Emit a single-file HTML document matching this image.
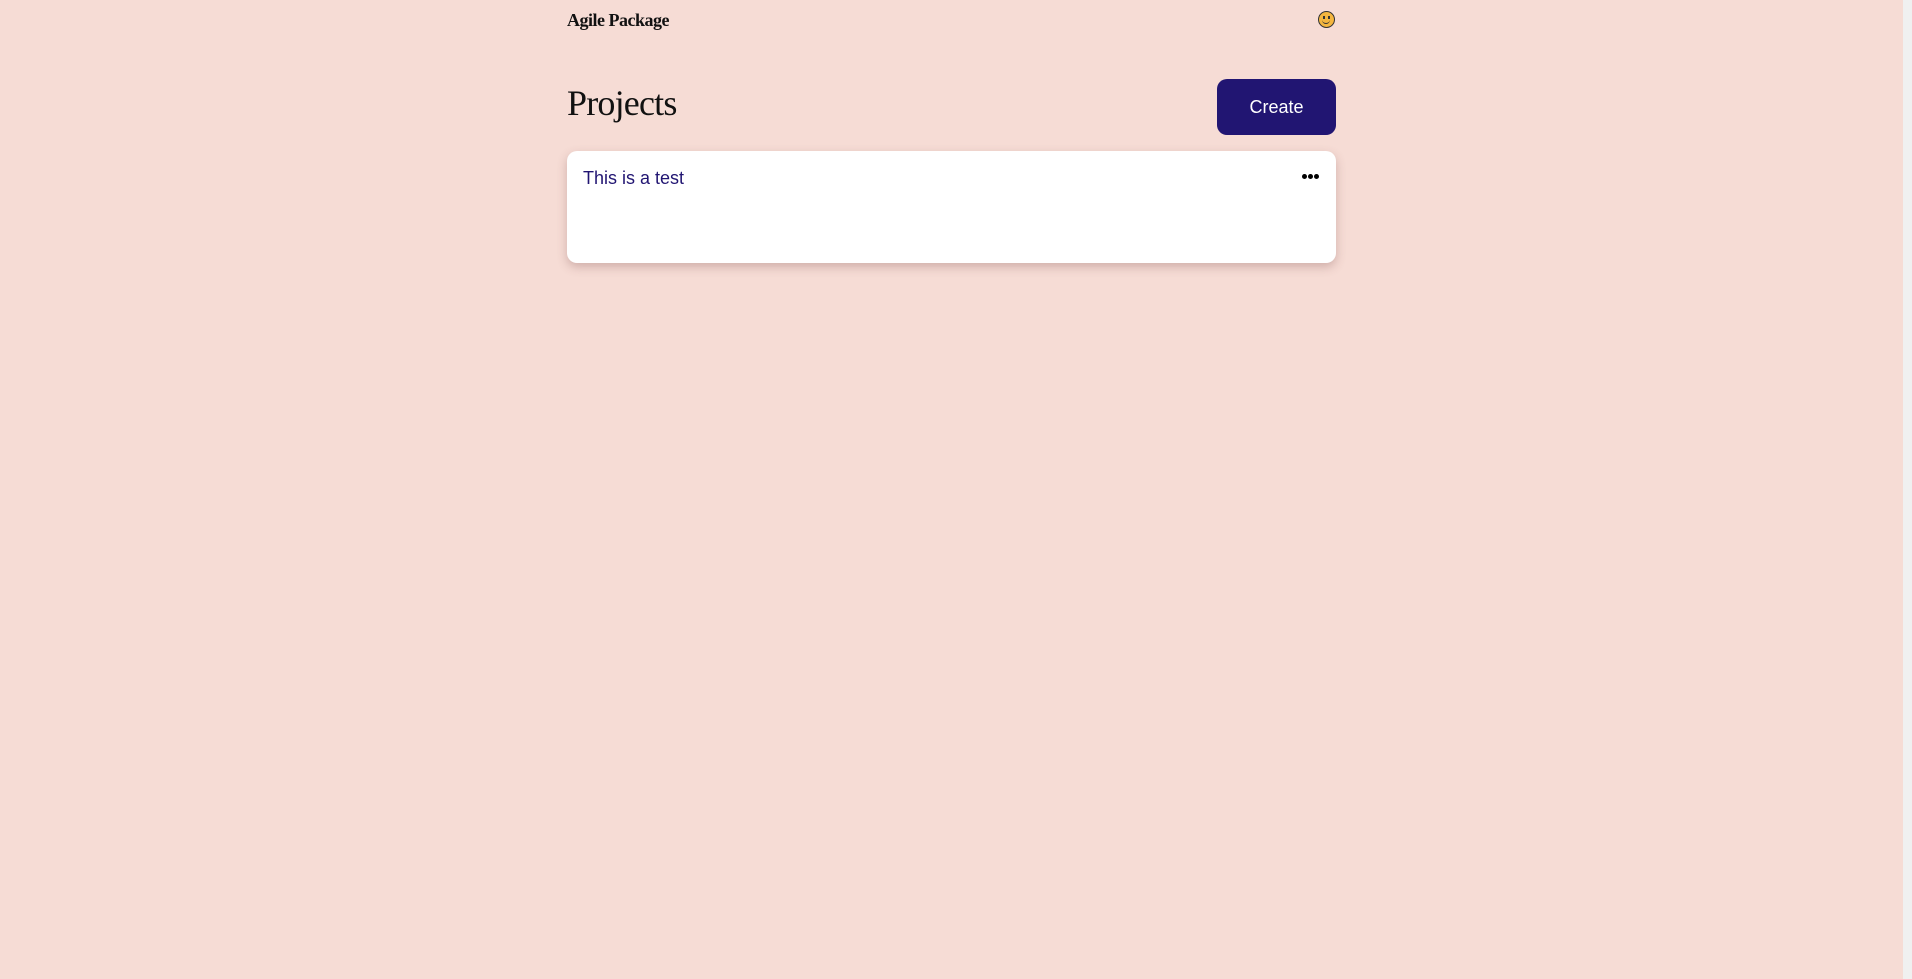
<!DOCTYPE html>
<html><head><meta charset="utf-8"><style>
html,body{margin:0;padding:0;width:1912px;height:979px;overflow:hidden;background:#f6dcd5;}
.sb{position:absolute;right:0;top:0;width:9px;height:979px;background:#f0f0f0;}
.t{position:absolute;left:567px;top:10px;font:bold 18px "Liberation Serif",serif;color:#111;letter-spacing:-0.5px;}
.sm{position:absolute;left:1318px;top:11px;width:17px;height:17px;border-radius:50%;background:#f4b63f;border:1px solid #333;box-sizing:border-box;}
.sm:before,.sm:after{content:"";position:absolute;top:4px;width:2px;height:3px;background:#333;}
.sm:before{left:4px}.sm:after{left:9px}
.sm i{position:absolute;left:3px;top:6px;width:8px;height:5px;border-bottom:1px solid #333;border-radius:0 0 5px 5px;}
h1{position:absolute;left:567px;top:82px;margin:0;font:normal 36px "Liberation Serif",serif;color:#111;letter-spacing:-0.8px;}
.btn{position:absolute;left:1217px;top:79px;width:119px;height:56px;border-radius:10px;background:#211572;color:#fff;font:18px "Liberation Sans",sans-serif;display:flex;align-items:center;justify-content:center;}
.card{position:absolute;left:567px;top:151px;width:769px;height:112px;background:#fff;border-radius:10px;box-shadow:0 4px 10px rgba(120,70,70,.3);}
.card span{position:absolute;left:16px;top:17px;font:18px "Liberation Sans",sans-serif;color:#211572;}
.d{position:absolute;left:735px;top:15px;}
.d b{display:inline-block;width:5px;height:5px;border-radius:50%;background:#000;margin-right:1px;}
</style></head><body>
<div class="t">Agile Package</div>
<div class="sm"><i></i></div>
<h1>Projects</h1>
<div class="btn">Create</div>
<div class="card"><span>This is a test</span><div class="d"><b></b><b></b><b></b></div></div>
<div class="sb"></div>
</body></html>
